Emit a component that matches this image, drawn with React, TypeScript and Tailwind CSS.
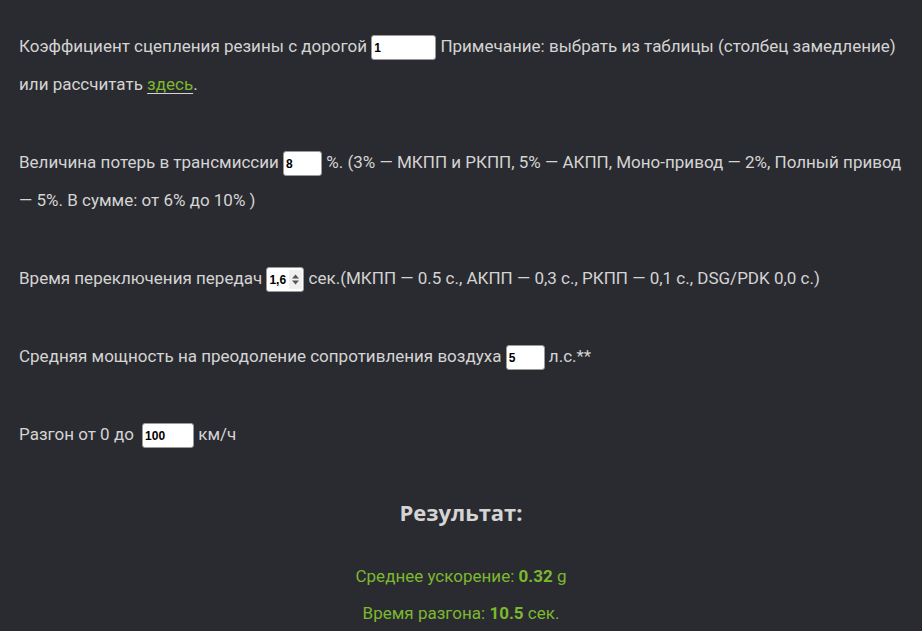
import { useState } from 'react';

function Field({ value, width, onChange }: { value: string; width: string; onChange: (v: string) => void }) {
  return (
    <input
      type="text"
      value={value}
      onChange={(e) => onChange(e.target.value)}
      className={`${width} h-[25px] align-middle bg-white border border-[#9a9a9a] rounded-[3px] px-[2px] text-[12px] font-bold text-black font-['Liberation_Sans',Arial,sans-serif] outline-none`}
    />
  );
}

function Spinner({ value, onChange }: { value: string; onChange: (v: string) => void }) {
  return (
    <span className="inline-flex items-center align-middle w-[38px] h-[25px] bg-white border border-[#9a9a9a] rounded-[3px] pl-[2px] pr-[1px]">
      <input
        type="text"
        value={value}
        onChange={(e) => onChange(e.target.value)}
        className="w-[20px] bg-transparent text-[12px] font-bold text-black font-['Liberation_Sans',Arial,sans-serif] outline-none"
      />
      <span className="flex-1 h-[19px] bg-[#efefef] flex items-center justify-center">
        <svg width="9" height="13" viewBox="0 0 9 13">
          <path d="M1 5.5 L4.5 1.5 L8 5.5 Z" fill="#555" />
          <path d="M1 7.5 L4.5 11.5 L8 7.5 Z" fill="#555" />
        </svg>
      </span>
    </span>
  );
}

export default function App() {
  const [grip, setGrip] = useState('1');
  const [loss, setLoss] = useState('8');
  const [shift, setShift] = useState('1,6');
  const [air, setAir] = useState('5');
  const [speed, setSpeed] = useState('100');

  return (
    <div className="min-h-screen bg-[#2a2b30] text-[#d4d4d4] font-['Roboto',sans-serif] text-[17px] px-[19px] pt-[27px] pb-6">
      <p className="leading-[38px] mb-[40px]">
        Коэффициент сцепления резины с дорогой <Field value={grip} width="w-[65px]" onChange={setGrip} /> Примечание: выбрать из таблицы (столбец замедление) или рассчитать{' '}
        <a href="#" className="text-[#7cb82f] underline decoration-[#d4d4d4] underline-offset-[3px]">здесь</a>.
      </p>

      <p className="leading-[38px] mb-[40px]">
        Величина потерь в трансмиссии <Field value={loss} width="w-[39px]" onChange={setLoss} /> %. (3% — МКПП и РКПП, 5% — АКПП, Моно-привод — 2%, Полный привод — 5%. В сумме: от 6% до 10% )
      </p>

      <p className="leading-[38px] mb-[40px]">
        Время переключения передач <Spinner value={shift} onChange={setShift} /> сек.(МКПП — 0.5 с., АКПП — 0,3 с., РКПП — 0,1 с., DSG/PDK 0,0 с.)
      </p>

      <p className="leading-[38px] mb-[40px]">
        Средняя мощность на преодоление сопротивления воздуха <Field value={air} width="w-[39px]" onChange={setAir} /> л.с.**
      </p>

      <p className="leading-[38px]">
        Разгон от 0 до <span className="ml-[4px]"><Field value={speed} width="w-[52px]" onChange={setSpeed} /></span> км/ч
      </p>

      <h2 className="mt-[40px] text-center font-['Open_Sans',sans-serif] font-bold text-[22px] leading-[38px] text-[#d4d4d4]">
        Результат:
      </h2>

      <div className="mt-[27px] text-center text-[#7cb82f] leading-[37px]">
        <p>Среднее ускорение: <b>0.32</b> g</p>
        <p>Время разгона: <b>10.5</b> сек.</p>
      </div>
    </div>
  );
}
